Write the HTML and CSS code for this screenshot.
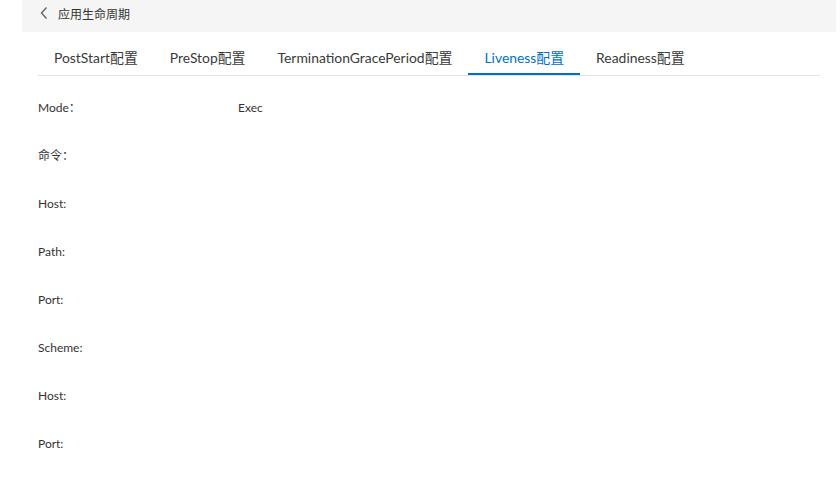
FILE: index.html
```html
<!DOCTYPE html>
<html lang="zh">
<head>
<meta charset="utf-8">
<link rel="stylesheet" href="styles.css">
</head>
<body>
<div class="page">
  <div class="header">
    <svg class="back" width="10" height="14" viewBox="0 0 10 14"><path d="M7.5 1.5 L2.5 7 L7.5 12.5" fill="none" stroke="#666" stroke-width="1.4"/></svg>
    <span class="title">应用生命周期</span>
  </div>
  <div class="content">
    <div class="tabs">
      <div class="tab">PostStart配置</div>
      <div class="tab">PreStop配置</div>
      <div class="tab">TerminationGracePeriod配置</div>
      <div class="tab active">Liveness配置</div>
      <div class="tab">Readiness配置</div>
    </div>
    <div class="form">
      <div class="row"><span class="label">Mode：</span><span class="value">Exec</span></div>
      <div class="row"><span class="label">命令：</span><span class="value"></span></div>
      <div class="row"><span class="label">Host:</span><span class="value"></span></div>
      <div class="row"><span class="label">Path:</span><span class="value"></span></div>
      <div class="row"><span class="label">Port:</span><span class="value"></span></div>
      <div class="row"><span class="label">Scheme:</span><span class="value"></span></div>
      <div class="row"><span class="label">Host:</span><span class="value"></span></div>
      <div class="row"><span class="label">Port:</span><span class="value"></span></div>
    </div>
  </div>
</div>
</body>
</html>
```
FILE: styles.css
```css
html, body {
  margin: 0;
  padding: 0;
  background: #fff;
}
body {
  font-family: "Lato", "Noto Sans CJK SC", sans-serif;
  color: #333;
  width: 840px;
  height: 484px;
  overflow: hidden;
}
.page {
  padding-left: 22px;
  width: 814px;
}
.header {
  height: 32px;
  background: #f5f5f5;
  display: flex;
  align-items: center;
  padding-left: 17px;
  box-sizing: border-box;
}
.back {
  display: block;
  margin-right: 9px;
  margin-top: -6px;
}
.title {
  font-size: 12px;
  color: #333;
  margin-top: -6px;
}
.content {
  padding: 0 16px;
}
.tabs {
  display: flex;
  margin-top: 9px;
  border-bottom: 1px solid #e3e3e3;
  width: 782px;
}
.tab {
  padding: 0 16px;
  height: 34px;
  line-height: 33px;
  font-size: 13.9px;
  color: #3a3a3a;
  box-sizing: border-box;
  border-bottom: 2px solid transparent;
  white-space: nowrap;
}
.tab.active {
  color: #0070cc;
  border-bottom-color: #0070cc;
}
.form {
  padding-top: 22px;
  display: flex;
  flex-direction: column;
  gap: 28px;
}
.row {
  display: flex;
  height: 20px;
  line-height: 20px;
  font-size: 12px;
}
.label {
  width: 200px;
  color: #333;
}
.value {
  color: #333;
}
```
